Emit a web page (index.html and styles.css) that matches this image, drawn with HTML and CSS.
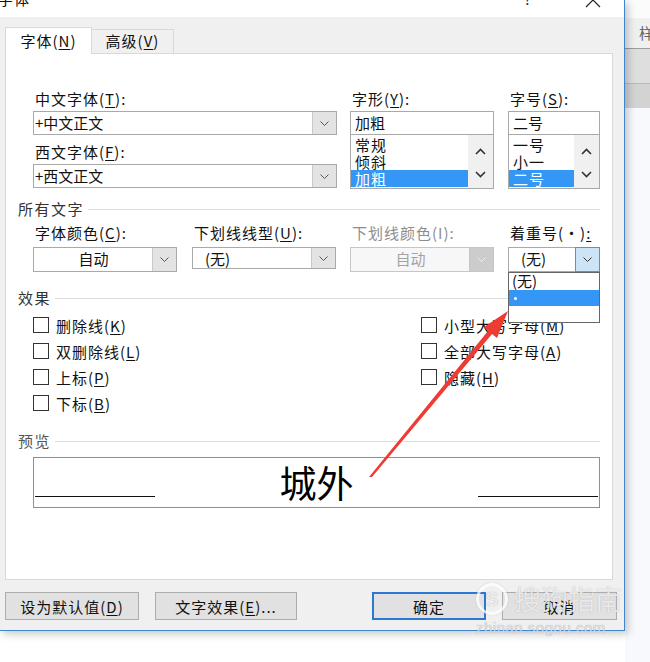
FILE: index.html
```html
<!DOCTYPE html>
<html lang="zh-CN">

<head>
  <meta charset="UTF-8">
  <meta name="viewport" content="width=device-width, initial-scale=1.0">
  <title>字体</title>
  <link rel="stylesheet" href="styles.css">
</head>

<body>
  <div class="screen">
    <div class="dialog">
      <div class="titlebar">
        <span class="title">字体</span>
        <span class="help">?</span>
        <svg class="close" width="16" height="16" viewBox="0 0 16 16"><path d="M1 1L15 15M15 1L1 15" stroke="#222" stroke-width="1.2" fill="none"/></svg>
      </div>

      <div class="tabs">
        <div class="tab active">字体(<u>N</u>)</div>
        <div class="tab">高级(<u>V</u>)</div>
      </div>

      <div class="panel">
        <!-- font faces -->
        <div class="font-row">
          <div class="col col-a">
            <div class="label">中文字体(<u>T</u>):</div>
            <div class="combo">
              <span class="value">+中文正文</span>
              <span class="drop"><svg width="9" height="5" viewBox="0 0 9 5"><path d="M.5.5l4 4 4-4" fill="none" stroke="#555"/></svg></span>
            </div>
            <div class="label second">西文字体(<u>F</u>):</div>
            <div class="combo">
              <span class="value">+西文正文</span>
              <span class="drop"><svg width="9" height="5" viewBox="0 0 9 5"><path d="M.5.5l4 4 4-4" fill="none" stroke="#555"/></svg></span>
            </div>
          </div>

          <div class="col col-b">
            <div class="label">字形(<u>Y</u>):</div>
            <div class="textbox">加粗</div>
            <div class="listbox">
              <div class="items">
                <div class="item">常规</div>
                <div class="item">倾斜</div>
                <div class="item selected">加粗</div>
              </div>
              <div class="scroll">
                <svg width="11" height="7" viewBox="0 0 11 7"><path d="M1 6L5.5 1.5L10 6" fill="none" stroke="#333" stroke-width="1.6"/></svg>
                <svg width="11" height="7" viewBox="0 0 11 7"><path d="M1 1L5.5 5.5L10 1" fill="none" stroke="#333" stroke-width="1.6"/></svg>
              </div>
            </div>
          </div>

          <div class="col col-c">
            <div class="label">字号(<u>S</u>):</div>
            <div class="textbox">二号</div>
            <div class="listbox">
              <div class="items">
                <div class="item">一号</div>
                <div class="item">小一</div>
                <div class="item selected">二号</div>
              </div>
              <div class="scroll">
                <svg width="11" height="7" viewBox="0 0 11 7"><path d="M1 6L5.5 1.5L10 6" fill="none" stroke="#333" stroke-width="1.6"/></svg>
                <svg width="11" height="7" viewBox="0 0 11 7"><path d="M1 1L5.5 5.5L10 1" fill="none" stroke="#333" stroke-width="1.6"/></svg>
              </div>
            </div>
          </div>
        </div>

        <!-- all text -->
        <div class="group-head"><span>所有文字</span><span class="rule"></span></div>
        <div class="attr-row">
          <div class="attr attr-color">
            <div class="label">字体颜色(<u>C</u>):</div>
            <div class="combo tall">
              <span class="value center">自动</span>
              <span class="drop"><svg width="9" height="5" viewBox="0 0 9 5"><path d="M.5.5l4 4 4-4" fill="none" stroke="#555"/></svg></span>
            </div>
          </div>
          <div class="attr attr-line">
            <div class="label">下划线线型(<u>U</u>):</div>
            <div class="combo short">
              <span class="value pad">(无)</span>
              <span class="drop"><svg width="9" height="5" viewBox="0 0 9 5"><path d="M.5.5l4 4 4-4" fill="none" stroke="#555"/></svg></span>
            </div>
          </div>
          <div class="attr attr-under">
            <div class="label disabled">下划线颜色(I):</div>
            <div class="combo tall off">
              <span class="value center">自动</span>
              <span class="drop"><svg width="9" height="5" viewBox="0 0 9 5"><path d="M.5.5l4 4 4-4" fill="none" stroke="#eee"/></svg></span>
            </div>
          </div>
          <div class="attr attr-emph">
            <div class="label">着重号(・)<u>:</u></div>
            <div class="combo tall focus">
              <span class="value pad">(无)</span>
              <span class="drop"><svg width="9" height="5" viewBox="0 0 9 5"><path d="M.5.5l4 4 4-4" fill="none" stroke="#333"/></svg></span>
            </div>
            <div class="popup">
              <div class="pop-item">(无)</div>
              <div class="pop-item picked"><span class="dot"></span></div>
              <div class="pop-item"></div>
            </div>
          </div>
        </div>

        <!-- effects -->
        <div class="group-head effects-head"><span>效果</span><span class="rule"></span></div>
        <div class="effects">
          <div class="check"><span class="box"></span>删除线(<u>K</u>)</div>
          <div class="check"><span class="box"></span>双删除线(<u>L</u>)</div>
          <div class="check"><span class="box"></span>上标(<u>P</u>)</div>
          <div class="check"><span class="box"></span>下标(<u>B</u>)</div>
          <div class="check"><span class="box"></span>小型大写字母(<u>M</u>)</div>
          <div class="check"><span class="box"></span>全部大写字母(<u>A</u>)</div>
          <div class="check"><span class="box"></span>隐藏(<u>H</u>)</div>
        </div>

        <!-- preview -->
        <div class="group-head preview-head"><span>预览</span><span class="rule"></span></div>
        <div class="preview">
          <span class="base"></span>
          <span class="sample">城外</span>
          <span class="base"></span>
        </div>
      </div>

      <div class="buttons">
        <button class="btn btn-default-val">设为默认值(<u>D</u>)</button>
        <button class="btn btn-effects">文字效果(<u>E</u>)...</button>
        <button class="btn btn-ok">确定</button>
        <button class="btn btn-cancel">取消</button>
      </div>
    </div>

    <div class="backdrop">
      <div class="bd-top"></div>
      <div class="bd-ribbon"><span>样</span></div>
      <div class="bd-band1"></div>
      <div class="bd-band2"></div>
      <div class="bd-page"></div>
    </div>
  </div>

  <div class="watermark">
    <div class="wm-logo"><span class="wm-s">S</span><span class="wm-name">搜狗指南</span></div>
    <div class="wm-url">zhinan.sogou.com</div>
  </div>

  <svg class="arrow" width="650" height="662" viewBox="0 0 650 662">
    <polygon points="369,477 372,477 492,334 497,338 508,311 484,327 488,331" fill="#ee3b33"/>
  </svg>
</body>

</html>
```

FILE: styles.css
```css
/* General */
body {
  margin: 0;
  width: 650px;
  height: 662px;
  overflow: hidden;
  position: relative;
  background: #fff;
  font-family: "Noto Sans CJK SC", "Liberation Sans", sans-serif;
  font-size: 15px;
  color: #111;
}

u {
  text-decoration: underline;
  text-underline-offset: 2px;
}

.screen {
  display: flex;
  height: 662px;
}

/* Dialog window */
.dialog {
  width: 624px;
  height: 630px;
  background: #f0f0f0;
  border-right: 1px solid #3f86d0;
  border-bottom: 1px solid #3f86d0;
  box-shadow: 3px 3px 8px rgba(0, 0, 0, 0.22);
  position: relative;
  z-index: 1;
  display: flex;
  flex-direction: column;
  flex-shrink: 0;
}

.titlebar {
  display: flex;
  align-items: flex-start;
  height: 17px;
  background: #fff;
  overflow: hidden;
}

.title {
  margin: -10px 0 0 -2px;
  line-height: 18px;
  letter-spacing: 1px;
}

.help {
  margin: -10px 0 0 auto;
  line-height: 18px;
  color: #333;
}

.close {
  margin: -8px 23px 0 54px;
}

/* Tabs */
.tabs {
  display: flex;
  align-items: flex-start;
  padding: 10px 0 0 5px;
}

.tab {
  box-sizing: border-box;
  height: 24px;
  margin-top: 2px;
  width: 82px;
  border: 1px solid #d9d9d9;
  border-bottom: none;
  border-left: none;
  background: #f0f0f0;
  text-align: center;
  line-height: 22px;
  letter-spacing: 1px;
}

.tab.active {
  width: 87px;
  height: 27px;
  margin: 0 0 -1px 0;
  line-height: 26px;
  border-left: 1px solid #d9d9d9;
  background: #fff;
  position: relative;
  z-index: 1;
}

.panel {
  box-sizing: border-box;
  width: 608px;
  height: 527px;
  margin-left: 5px;
  padding: 0 12px;
  background: #fff;
  border: 1px solid #d9d9d9;
}

.label {
  line-height: 18px;
  padding-left: 2px;
  letter-spacing: 1px;
  white-space: nowrap;
}

.label.disabled {
  color: #8d8d8d;
}

/* Font faces row */
.font-row {
  display: flex;
  margin: 36px 0 0 15px;
}

.col-a {
  width: 304px;
}

.col-b {
  width: 144px;
  margin-left: 13px;
}

.col-c {
  width: 92px;
  margin-left: 14px;
}

.label.second {
  margin-top: 8px;
}

.combo {
  box-sizing: border-box;
  display: flex;
  height: 24px;
  margin-top: 3px;
  border: 1px solid #a9a9a9;
  background: #fff;
}

.combo .value {
  flex: 1;
  line-height: 22px;
  padding-left: 1px;
  white-space: nowrap;
}

.combo .value.center {
  text-align: center;
}

.combo .value.pad {
  padding-left: 12px;
}

.combo .drop {
  width: 23px;
  display: flex;
  align-items: center;
  justify-content: center;
  background: #e3e3e3;
  border-left: 1px solid #c9c9c9;
}

.combo.tall {
  height: 25px;
  margin-top: 5px;
}

.combo.short {
  height: 22px;
  margin-top: 5px;
}

.combo.off {
  border-color: #c6c6c6;
  background: #f7f7f7;
  color: #a3a3a3;
}

.combo.off .drop {
  background: #cccccc;
  border-left-color: #c6c6c6;
}

.combo.focus .drop {
  background: #cde4f7;
  border: 1px solid #4f94dc;
  margin: -1px -1px -1px 0;
}

.textbox {
  box-sizing: border-box;
  height: 24px;
  margin-top: 3px;
  border: 1px solid #a9a9a9;
  line-height: 22px;
  padding-left: 4px;
}

.listbox {
  box-sizing: border-box;
  display: flex;
  height: 55px;
  margin-top: -1px;
  border: 1px solid #a9a9a9;
}

.items {
  flex: 1;
  padding-top: 1px;
}

.item {
  height: 17px;
  line-height: 17px;
  padding-left: 4px;
  letter-spacing: 1px;
}

.item.selected {
  background: #3597f5;
  color: #fff;
}

.scroll {
  width: 25px;
  background: #f0f0f0;
  display: flex;
  flex-direction: column;
  align-items: center;
  padding-top: 13px;
  gap: 16px;
}

/* Group headings */
.group-head {
  display: flex;
  align-items: center;
  margin-top: 11px;
  line-height: 18px;
  letter-spacing: 1.5px;
  color: #333;
}

.group-head .rule {
  flex: 1;
  height: 1px;
  margin-left: 4px;
  background: #dedede;
}

.effects-head {
  margin-top: 17px;
}

.preview-head {
  margin-top: 16px;
  color: #555;
}

/* All text row */
.attr-row {
  display: flex;
  margin: 6px 0 0 15px;
}

.attr {
  width: 144px;
}

.attr-line {
  margin-left: 15px;
}

.attr-under {
  margin-left: 14px;
}

.attr-emph {
  width: 92px;
  margin-left: 14px;
  position: relative;
}

.popup {
  position: absolute;
  left: 0;
  top: 48px;
  width: 92px;
  box-sizing: border-box;
  border: 1px solid #666;
  background: #fff;
  z-index: 2;
}

.pop-item {
  height: 16px;
  line-height: 16px;
  padding-left: 3px;
}

.pop-item:first-child {
  height: 17px;
}

.pop-item.picked {
  background: #3597f5;
  display: flex;
  align-items: center;
}

.dot {
  width: 3px;
  height: 3px;
  margin-left: 2px;
  background: #fff;
  border-radius: 50%;
}

/* Effects */
.effects {
  display: grid;
  grid-template-columns: 388px 1fr;
  grid-template-rows: repeat(4, 26px);
  grid-auto-flow: column;
  margin: 5px 0 0 15px;
}

.check {
  display: flex;
  align-items: center;
  letter-spacing: 1px;
  white-space: nowrap;
}

.box {
  box-sizing: border-box;
  width: 16px;
  height: 16px;
  margin-right: 7px;
  border: 1px solid #333;
  background: #fff;
}

/* Preview */
.preview {
  box-sizing: border-box;
  display: flex;
  align-items: flex-end;
  width: 567px;
  height: 51px;
  margin: 7px 0 0 15px;
  padding: 0 1px;
  border: 1px solid #8f8f8f;
}

.preview .base {
  width: 120px;
  height: 1px;
  margin-bottom: 10px;
  background: #111;
}

.preview .sample {
  flex: 1;
  text-align: center;
  font-size: 37px;
  line-height: 49px;
  color: #000;
}

/* Buttons */
.buttons {
  display: flex;
  margin-top: 12px;
}

.btn {
  box-sizing: border-box;
  height: 28px;
  padding: 0;
  border: 1px solid #adadad;
  background: #e1e1e1;
  font-family: inherit;
  font-size: 15px;
  letter-spacing: 1px;
  color: #111;
}

.btn-default-val {
  width: 134px;
  margin-left: 5px;
}

.btn-effects {
  width: 142px;
  margin-left: 16px;
}

.btn-ok {
  width: 114px;
  margin-left: 75px;
  border-color: #2a78d4;
  box-shadow: inset 0 0 0 1px #2a78d4;
}

.btn-cancel {
  width: 115px;
  margin-left: 16px;
}

/* Window behind the dialog */
.backdrop {
  flex: 1;
  display: flex;
  flex-direction: column;
  overflow: hidden;
}

.bd-top {
  height: 18px;
  background: #fbfbfb;
}

.bd-ribbon {
  height: 30px;
  background: #f0f0f0;
  border-bottom: 1px solid #9c9c9c;
  line-height: 30px;
  color: #666;
  white-space: nowrap;
}

.bd-ribbon span {
  margin-left: 14px;
}

.bd-band1 {
  height: 34px;
  background: #dedede;
  border-bottom: 1px solid #b9b9b9;
}

.bd-band2 {
  height: 24px;
  background: #d3d3d3;
}

.bd-page {
  flex: 1;
  background: #f7f9fc;
}

/* Overlays */
.watermark {
  position: absolute;
  left: 476px;
  top: 583px;
  z-index: 4;
  color: rgba(255, 255, 255, 0.75);
  text-shadow: 0 0 1px rgba(110, 110, 110, 0.55);
}

.wm-logo {
  display: flex;
  align-items: center;
}

.wm-s {
  box-sizing: border-box;
  width: 32px;
  height: 32px;
  border: 3px solid rgba(255, 255, 255, 0.75);
  border-radius: 50%;
  box-shadow: 0 0 1px rgba(110, 110, 110, 0.5);
  text-align: center;
  line-height: 26px;
  font-family: "Liberation Sans", sans-serif;
  font-weight: bold;
  font-size: 20px;
}

.wm-name {
  margin-left: 6px;
  font-size: 27px;
  line-height: 32px;
}

.wm-url {
  margin-top: 5px;
  font-family: "Liberation Sans", sans-serif;
  font-size: 15px;
  line-height: 16px;
  letter-spacing: 0.5px;
  color: rgba(225, 230, 238, 0.85);
}

.arrow {
  position: absolute;
  left: 0;
  top: 0;
  z-index: 5;
  pointer-events: none;
}
```
